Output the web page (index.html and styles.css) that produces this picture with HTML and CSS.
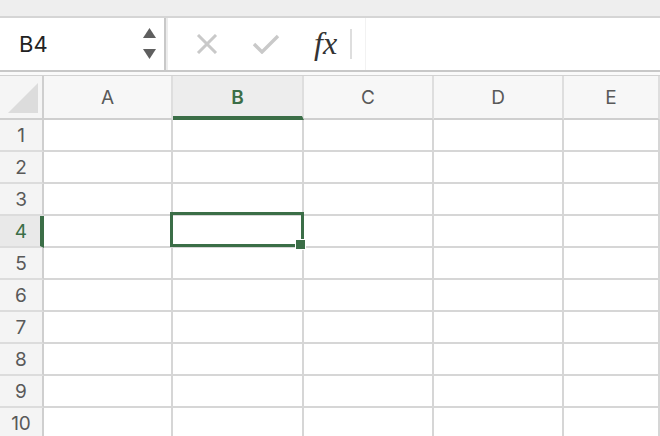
FILE: index.html
```html
<!DOCTYPE html>
<html lang="en">
<head>
    <meta charset="UTF-8">
    <title>Sheet1</title>
    <link rel="stylesheet" href="styles.css">
</head>
<body>
    <div class="top-strip"></div>

    <div class="formula-bar">
        <div class="name-box">
            <span class="cell-ref">B4</span>
            <svg class="spinner" width="13" height="32" viewBox="0 0 13 32">
                <polygon points="0,10 6.5,0 13,10" fill="#5f5f5f"/>
                <polygon points="0,21 13,21 6.5,31" fill="#5f5f5f"/>
            </svg>
        </div>
        <div class="actions">
            <svg class="icon-cancel" width="22" height="20" viewBox="0 0 22 20">
                <path d="M2 1 L20 19 M20 1 L2 19" stroke="#c9c9c9" stroke-width="3" fill="none"/>
            </svg>
            <svg class="icon-enter" width="28" height="20" viewBox="0 0 28 20">
                <path d="M2 10 L10 18 L26 2" stroke="#c9c9c9" stroke-width="3.4" fill="none"/>
            </svg>
            <span class="fx">fx</span>
            <span class="sep"></span>
        </div>
        <div class="formula-input"></div>
    </div>

    <div class="bar-gap"></div>

    <div class="sheet" id="sheet"></div>

    <script>
        const sheet = document.getElementById('sheet');
        const cols = ['A', 'B', 'C', 'D', 'E'];
        const activeCol = 'B';
        const activeRow = 4;

        // header row
        const corner = document.createElement('div');
        corner.className = 'corner';
        corner.innerHTML = '<span class="corner-tri"></span>';
        sheet.appendChild(corner);

        cols.forEach(c => {
            const h = document.createElement('div');
            h.className = 'col-head' + (c === activeCol ? ' active' : '');
            h.textContent = c;
            sheet.appendChild(h);
        });

        // body rows
        for (let r = 1; r <= 10; r++) {
            const rh = document.createElement('div');
            rh.className = 'row-head' + (r === activeRow ? ' active' : '');
            rh.textContent = r;
            sheet.appendChild(rh);

            cols.forEach(c => {
                const cell = document.createElement('div');
                cell.className = 'cell';
                if (c === activeCol && r === activeRow) {
                    cell.classList.add('selected');
                    cell.innerHTML = '<span class="selection"></span><span class="fill-handle"></span>';
                }
                sheet.appendChild(cell);
            });
        }
    </script>
</body>
</html>
```

FILE: styles.css
```css
body, html {
    margin: 0;
    padding: 0;
    background: #fff;
    color: #333;
    font-family: "Inter", "Liberation Sans", sans-serif;
    overflow: hidden;
}

.top-strip {
    height: 16px;
    background: #eeeeee;
    border-bottom: 2px solid #d5d5d5;
}

/* name box + formula row */
.formula-bar {
    display: flex;
    height: 52px;
    background: #fff;
}

.name-box {
    width: 166px;
    box-sizing: border-box;
    display: flex;
    align-items: center;
    justify-content: space-between;
    padding: 0 8px 0 19px;
    border-right: 2px solid #c8c8c8;
}

.cell-ref {
    font-size: 22px;
    color: #222;
}

.actions {
    display: flex;
    align-items: center;
    padding-left: 28px;
    border-left: 2px solid #ececec;
}

.icon-enter {
    margin-left: 34px;
}

.fx {
    margin-left: 34px;
    font-family: "Liberation Serif", serif;
    font-style: italic;
    font-size: 32px;
    color: #333;
    line-height: 1;
    margin-top: -3px;
}

.sep {
    width: 2px;
    height: 30px;
    margin-left: 13px;
    background: #dedede;
}

.formula-input {
    flex: 1;
    margin-left: 13px;
    border-left: 1px solid #f2f2f2;
}

.bar-gap {
    height: 3px;
    border-top: 2px solid #c8c8c8;
    border-bottom: 1px solid #d2d2d2;
    background: #fafafa;
}

/* grid */
.sheet {
    display: grid;
    grid-template-columns: 44px 129px 131px 130px 130px 1fr;
    grid-template-rows: 44px;
    grid-auto-rows: 32px;
    font-size: 19px;
}

.corner, .col-head, .row-head, .cell {
    box-sizing: border-box;
    border-right: 2px solid #d6d6d6;
    border-bottom: 2px solid #d6d6d6;
}

.corner {
    position: relative;
    background: #f5f5f5;
    border-color: #cfcfcf;
}

.corner-tri {
    position: absolute;
    left: 8px;
    top: 7px;
    width: 30px;
    height: 30px;
    background: #dcdcdc;
    clip-path: polygon(100% 0, 100% 100%, 0 100%);
}

.col-head {
    display: flex;
    align-items: center;
    justify-content: center;
    background: #f7f7f7;
    color: #595959;
    border-right-color: #dedede;
    border-bottom-color: #cfcfcf;
}

.col-head.active {
    background: #ededed;
    color: #3b6e47;
    font-weight: 600;
    border-bottom: 4px solid #3b6e47;
    padding-top: 2px;
}

.row-head {
    display: flex;
    align-items: center;
    justify-content: center;
    background: #f4f4f4;
    color: #595959;
    border-right-color: #cfcfcf;
    border-bottom-color: #dcdcdc;
}

.row-head.active {
    background: #e9e9e9;
    color: #3b6e47;
    border-right: 4px solid #3b6e47;
    padding-left: 2px;
}

.cell.selected {
    position: relative;
}

.selection {
    position: absolute;
    left: -3px;
    top: -4px;
    right: -2px;
    bottom: -1px;
    border: 3px solid #3b6e47;
}

.fill-handle {
    position: absolute;
    right: -3px;
    bottom: -3px;
    width: 9px;
    height: 9px;
    background: #3b6e47;
    box-shadow: 0 0 0 1px #fff;
}
```
